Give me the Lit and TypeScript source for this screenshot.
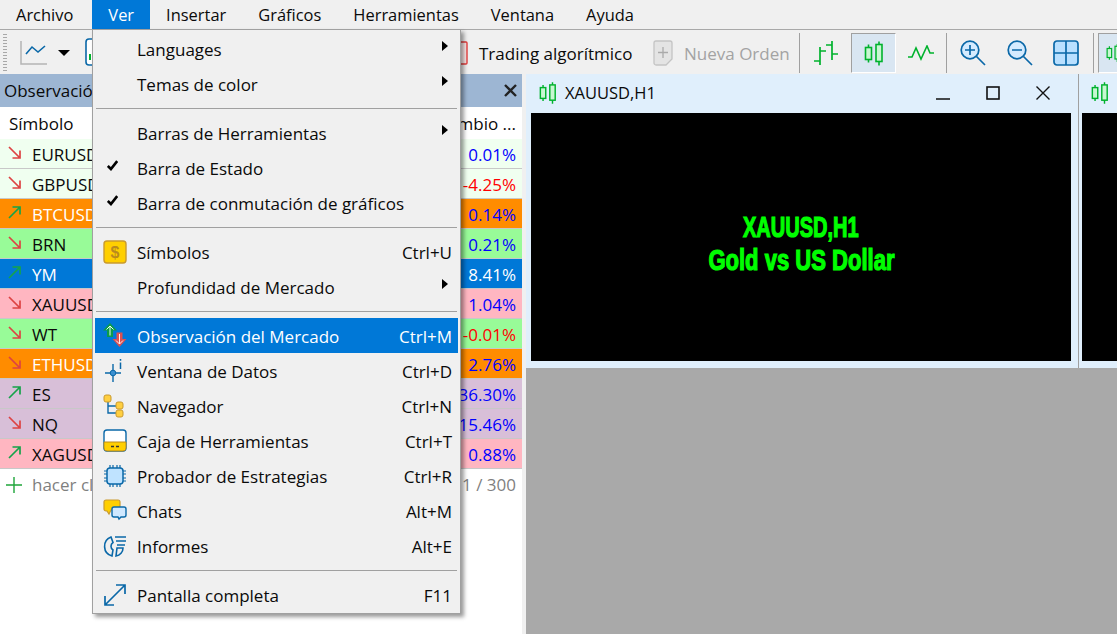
import { LitElement, html, css, svg } from "lit";
import { customElement } from "lit/decorators.js";

const G = "#00b22d";
const B = "#0a68a8";
const up = svg`<path d="M1 12 L12 1 M4.5 1 H12 V8.5" fill="none" stroke="#16a34a" stroke-width="1.7"/>`;
const down = svg`<path d="M1 1 L12 12 M4.5 12 H12 V4.5" fill="none" stroke="#dd4343" stroke-width="1.7"/>`;

const candles = (w: number, h: number) => html`<svg width=${w} height=${h} viewBox="0 0 20 24"><path d="M4.5 3V21M15 0V24" stroke=${G} stroke-width="1.6"/><rect x="1.5" y="6" width="6" height="12" fill="#c8f7d2" stroke=${G} stroke-width="1.6"/><rect x="12" y="3" width="6" height="17" fill="#c8f7d2" stroke=${G} stroke-width="1.6"/></svg>`;

type Row = { s: string; c: string; bg: string; light?: boolean; neg?: boolean; up?: boolean };
const rows: Row[] = [
  { s: "EURUSD", c: "0.01%", bg: "#f0fff0" },
  { s: "GBPUSD", c: "-4.25%", bg: "#f0fff0", neg: true },
  { s: "BTCUSD", c: "0.14%", bg: "#ff8c00", light: true, up: true },
  { s: "BRN", c: "0.21%", bg: "#98fb98" },
  { s: "YM", c: "8.41%", bg: "#0078d7", light: true, up: true },
  { s: "XAUUSD", c: "1.04%", bg: "#ffb6c1" },
  { s: "WT", c: "-0.01%", bg: "#98fb98", neg: true },
  { s: "ETHUSD", c: "2.76%", bg: "#ff8c00", light: true },
  { s: "ES", c: "36.30%", bg: "#d8bfd8", up: true },
  { s: "NQ", c: "15.46%", bg: "#d8bfd8" },
  { s: "XAGUSD", c: "0.88%", bg: "#ffb6c1", up: true },
];

const icons: Record<string, unknown> = {
  dollar: html`<svg width="24" height="24" viewBox="0 0 24 24"><rect x="1" y="1" width="22" height="22" rx="3" fill="#ffcf00" stroke="#c99a2e" stroke-width="1.4"/><text x="12" y="18" text-anchor="middle" font-family="Liberation Sans" font-weight="700" font-size="16" fill="#b98a1e">$</text></svg>`,
  market: html`<svg width="26" height="26" viewBox="0 0 26 26"><path d="M8 0 L15 7.5 H11 V14 H5 V7.5 H1 Z" fill="#0b9b4a"/><path d="M8 3 V12.5 M4.5 6.5 L8 3 11.5 6.5" fill="none" stroke="#e8fff0" stroke-width="1"/><path d="M17.5 24 L10.5 16 H14.5 V9.5 H20.5 V16 H24.5 Z" fill="#dc5050"/><path d="M17.5 21 V11 M14 17.5 L17.5 21 21 17.5" fill="none" stroke="#ffecec" stroke-width="1"/></svg>`,
  data: html`<svg width="24" height="24" viewBox="0 0 24 24"><path d="M10 5V23M2 14H18" stroke=${B} stroke-width="1.4"/><circle cx="10" cy="14" r="2.8" fill="#3a8fd0" stroke=${B} stroke-width="1"/><path d="M17.5 0V1.8M17.5 3.5V10" stroke=${B} stroke-width="1.5"/></svg>`,
  nav: html`<svg width="24" height="24" viewBox="0 0 24 24"><path d="M5 5V19H15M5 12H15" fill="none" stroke=${B} stroke-width="1.4"/><rect x="1" y="1" width="7" height="7" rx="2" fill="#ffcf40" stroke="#c99a2e"/><rect x="13" y="8" width="7" height="7" rx="2" fill="#ffcf40" stroke="#c99a2e"/><rect x="13" y="16" width="7" height="7" rx="2" fill="#ffcf40" stroke="#c99a2e"/></svg>`,
  box: html`<svg width="24" height="24" viewBox="0 0 24 24"><rect x="1" y="1" width="22" height="21" rx="3" fill="#fff" stroke=${B} stroke-width="1.4"/><path d="M1 13H23V19a3 3 0 0 1-3 3H4a3 3 0 0 1-3-3Z" fill="#ffcf00" stroke="#b98a1e"/><path d="M8 17.5H11M13 17.5H16" stroke="#333" stroke-width="1.3"/></svg>`,
  chip: html`<svg width="24" height="24" viewBox="0 0 24 24"><rect x="4" y="4" width="16" height="16" rx="3" fill="#bfe3ff" stroke=${B} stroke-width="1.5"/><path d="M7 1V4M10 1V4M14 1V4M17 1V4M7 20V23M10 20V23M14 20V23M17 20V23M1 7H4M1 10H4M1 14H4M1 17H4M20 7H23M20 10H23M20 14H23M20 17H23" stroke=${B} stroke-width="1.2"/></svg>`,
  chat: html`<svg width="24" height="24" viewBox="0 0 24 24"><path d="M3 1H15a2 2 0 0 1 2 2V11H8L6 15 4 12H3a2 2 0 0 1-2-2V3a2 2 0 0 1 2-2Z" fill="#ffcf00" stroke="#c99a2e" stroke-width="1.2"/><path d="M11 8H21a2 2 0 0 1 2 2V16a2 2 0 0 1-2 2H18L16 20 15 18H11a2 2 0 0 1-2-2V10a2 2 0 0 1 2-2Z" fill="#cfe8ff" stroke=${B} stroke-width="1.4"/></svg>`,
  report: html`<svg width="24" height="24" viewBox="0 0 24 24"><path d="M8 3 A10 10 0 0 0 9 22 L10 16 A4.5 4.5 0 0 1 10 8.5 Z" fill="none" stroke=${B} stroke-width="1.6"/><path d="M13 22 A8 8 0 0 0 20 14 H14 Z" fill="none" stroke=${B} stroke-width="1.6"/><path d="M12 3H23M13 7H23M14 11H22" stroke=${B} stroke-width="1.4"/></svg>`,
  full: html`<svg width="24" height="24" viewBox="0 0 24 24"><path d="M2 22 L22 2 M13 2H22V11 M2 13V22H11" fill="none" stroke=${B} stroke-width="1.7"/></svg>`,
};

type Item = { l?: string; k?: string; i?: string; sub?: boolean; chk?: boolean; on?: boolean; sep?: boolean };
const items: Item[] = [
  { l: "Languages", sub: true },
  { l: "Temas de color", sub: true },
  { sep: true },
  { l: "Barras de Herramientas", sub: true },
  { l: "Barra de Estado", chk: true },
  { l: "Barra de conmutación de gráficos", chk: true },
  { sep: true },
  { l: "Símbolos", k: "Ctrl+U", i: "dollar" },
  { l: "Profundidad de Mercado", sub: true },
  { sep: true },
  { l: "Observación del Mercado", k: "Ctrl+M", i: "market", on: true },
  { l: "Ventana de Datos", k: "Ctrl+D", i: "data" },
  { l: "Navegador", k: "Ctrl+N", i: "nav" },
  { l: "Caja de Herramientas", k: "Ctrl+T", i: "box" },
  { l: "Probador de Estrategias", k: "Ctrl+R", i: "chip" },
  { l: "Chats", k: "Alt+M", i: "chat" },
  { l: "Informes", k: "Alt+E", i: "report" },
  { sep: true },
  { l: "Pantalla completa", k: "F11", i: "full" },
];

@customElement("app-root")
export class AppRoot extends LitElement {
  static styles = css`
    :host { display: block; position: relative; width: 1117px; height: 634px; overflow: hidden; background: #f0f0f0; color: #0a0a0a;
      font-family: "Open Sans", "Noto Sans", sans-serif; font-size: 17px; }
    .menubar { display: flex; height: 29px; border-bottom: 1px solid #a8a8a8; line-height: 29px; font-size: 16.45px; }
    .menubar span { padding: 0 16px; }
    .menubar .m0 { padding-right: 19px; }
    .menubar .act { background: #0078d7; color: #fff; }
    .toolbar { display: flex; align-items: center; height: 44px; padding-top: 2px; box-sizing: border-box; white-space: nowrap; }
    .toolbar > * { flex: none; }
    .grip { width: 4px; height: 40px; margin-left: 3px; background-image: radial-gradient(#a8a8a8 45%, transparent 50%); background-size: 2px 3px; }
    .tsep { width: 1px; height: 40px; background: #a0a0a0; }
    .tool { display: flex; align-items: center; justify-content: center; width: 46.5px; height: 40px; box-sizing: border-box; }
    .wide { width: 51px; }
    .mid { width: 50px; }
    .first { margin-left: 3px; }
    .last { margin-right: 3px; }
    .pressed { background: #d9e6f2; border: 1px solid; border-color: #a0a0a0 #fff #fff #a0a0a0; width: 45px; }
    .tail { margin-left: 4px; width: 40px; justify-content: flex-start; padding-left: 7px; }
    .t1 { margin-left: 13px; }
    .t2 { margin-left: 10px; }
    .t3 { margin-left: 15px; }
    .gap { width: 350px; }
    .algo { margin-left: 11px; width: 174px; }
    .neworder { display: flex; align-items: center; gap: 11px; color: #a3a3a3; width: 146px; }
    .main { display: flex; height: 560px; }
    .panel { width: 522px; flex: none; display: flex; flex-direction: column; }
    .ptitle { height: 33px; background: #9db6d3; display: flex; justify-content: space-between; align-items: center; padding: 0 5px 0 4px; flex: none; box-sizing: border-box; }
    .thead { height: 32px; background: #fff; display: flex; justify-content: space-between; align-items: center; padding: 1px 6px 0 9px; flex: none; box-sizing: border-box; }
    .row { height: 30px; box-sizing: border-box; border-bottom: 1px solid #c8c8c8; display: flex; align-items: center; justify-content: space-between; padding: 1px 6px 0 8px; flex: none; }
    .sym { display: flex; align-items: center; gap: 11px; }
    .sym svg { margin-top: -4px; }
    .chg { color: #0000ff; }
    .chg.neg { color: #ff0000; }
    .chg.white { color: #fff; }
    .light { color: #fff; }
    .add { height: 31px; background: #fff; display: flex; justify-content: space-between; align-items: center; padding: 0 6px; color: #7f7f7f; flex: none; }
    .add div { display: flex; align-items: center; gap: 10px; }
    .fill { flex: 1; background: #fff; }
    .area { flex: 1; margin-left: 4px; display: flex; flex-direction: column; min-width: 0; }
    .windows { display: flex; height: 294px; background: #e0effc; flex: none; }
    .win { width: 552px; flex: none; border-right: 1px solid #a0a0a0; display: flex; flex-direction: column; }
    .wtitle { height: 39px; display: flex; align-items: center; padding: 0 0 2px 13px; gap: 8px; flex: none; box-sizing: border-box; }
    .wname { flex: 1; font-size: 16.5px; }
    .wbtn { display: flex; gap: 36px; align-items: center; margin-right: 28px; }
    .black { width: 540px; height: 248px; margin-left: 5px; background: #000; color: #00ff00; display: flex; flex-direction: column; align-items: center; justify-content: center; padding-top: 14px; box-sizing: border-box;
      font-family: "Liberation Sans", sans-serif; font-weight: 700; font-size: 29px; line-height: 33px; -webkit-text-stroke: 1.2px #00ff00; }
    .black span { display: block; white-space: nowrap; }
    .l1 { transform: scaleX(0.69); }
    .l2 { transform: scaleX(0.76); }
    .win2 { flex: 1; display: flex; flex-direction: column; min-width: 0; }
    .win2 .wtitle { padding-left: 12px; }
    .black2 { height: 248px; margin-left: 3px; background: #000; }
    .gray { flex: 1; background: #a9a9a9; }
    .menu { position: absolute; left: 92px; top: 29px; width: 369px; height: 585px; box-sizing: border-box; background: #f0f0f0; border: 1px solid #a0a0a0; padding: 1px 2px; box-shadow: 3px 3px 4px rgba(0,0,0,.4); }
    .mi { height: 35px; display: flex; align-items: center; padding-right: 6px; }
    .mi.on { background: #0078d7; color: #fff; }
    .mi .ic { width: 42px; flex: none; display: flex; justify-content: center; padding-right: 2px; box-sizing: border-box; }
    .mi .ic svg { flex: none; }
    .mi .lab { flex: 1; padding-top: 2px; }
    .mi .key { padding-top: 2px; }
    .arrow { width: 0; height: 0; border-left: 6px solid #000; border-top: 5px solid transparent; border-bottom: 5px solid transparent; margin: 0 4px 6px 0; }
    .check { width: 11px; height: 11px; margin: 0 6px 4px 0; }
    .ms { height: 14px; display: flex; align-items: center; padding: 0 1px; }
    .ms i { display: block; width: 100%; height: 1px; background: #a0a0a0; }
  `;

  render() {
    return html`
      <div class="menubar">
        <span class="m0">Archivo</span><span class="act">Ver</span><span>Insertar</span><span>Gráficos</span><span>Herramientas</span><span>Ventana</span><span>Ayuda</span>
      </div>
      <div class="toolbar">
        <div class="grip"></div>
        <svg class="t1" width="28" height="26" viewBox="0 0 28 26"><path d="M1 1V24H27" fill="none" stroke="#b4b4b4" stroke-width="1.5"/><path d="M6 14L12 7 18 12 25 6" fill="none" stroke=${B} stroke-width="1.6"/></svg>
        <svg class="t2" width="12" height="8" viewBox="0 0 12 8"><path d="M0 1H12L6 7Z"/></svg>
        <svg class="t3" width="24" height="30" viewBox="0 0 24 30"><rect x="1" y="1" width="20" height="26" rx="3" fill="#fff" stroke=${B} stroke-width="1.6"/><path d="M5 16V22" stroke=${G} stroke-width="2"/></svg>
        <div class="gap"></div>
        <svg width="9" height="24" viewBox="0 0 9 24"><path d="M0 1H7a1 1 0 0 1 1 1V22a1 1 0 0 1-1 1H0" fill="#fde8e8" stroke="#e23c3c" stroke-width="1.4"/></svg>
        <div class="algo">Trading algorítmico</div>
        <div class="neworder"><svg width="20" height="26" viewBox="0 0 20 26"><path d="M3 1H17a2 2 0 0 1 2 2V19L13 25H3a2 2 0 0 1-2-2V3a2 2 0 0 1 2-2Z" fill="#e4e4e4" stroke="#c4c4c4" stroke-width="1.3"/><path d="M10 7V18M5 12.5H15" stroke="#aaa" stroke-width="1.3"/></svg>Nueva Orden</div>
        <div class="tsep"></div>
        <div class="tool wide"><svg width="26" height="26" viewBox="0 0 26 26"><path d="M7 7V25M1 21H7M7 11H13M19 1V20M13 5H19M19 14H25" fill="none" stroke=${G} stroke-width="1.7"/></svg></div>
        <div class="tool pressed">${candles(20, 25)}</div>
        <div class="tool mid"><svg width="26" height="16" viewBox="0 0 26 16"><path d="M0 12H4L8 3 13 14 19 1 22 8H26" fill="none" stroke=${G} stroke-width="1.6"/></svg></div>
        <div class="tsep"></div>
        <div class="tool first"><svg width="26" height="26" viewBox="0 0 26 26"><circle cx="10" cy="10" r="8.8" fill="#d4ebff" stroke=${B} stroke-width="1.7"/><path d="M16.5 16.5L25 25M5 10H15M10 5V15" stroke=${B} stroke-width="1.7"/></svg></div>
        <div class="tool"><svg width="26" height="26" viewBox="0 0 26 26"><circle cx="10" cy="10" r="8.8" fill="#d4ebff" stroke=${B} stroke-width="1.7"/><path d="M16.5 16.5L25 25M5 10H15" stroke=${B} stroke-width="1.7"/></svg></div>
        <div class="tool last"><svg width="26" height="26" viewBox="0 0 26 26"><rect x="1" y="1" width="24" height="24" rx="3" fill="#b9e0ff" stroke=${B} stroke-width="1.7"/><path d="M13 1V25M1 13H25" stroke=${B} stroke-width="1.7"/></svg></div>
        <div class="tsep"></div>
        <div class="tool pressed tail">${candles(15, 20)}</div>
      </div>
      <div class="main">
        <div class="panel">
          <div class="ptitle"><span>Observación</span><svg width="13" height="13" viewBox="0 0 13 13"><path d="M1 1L12 12M12 1L1 12" stroke="#222" stroke-width="2.4"/></svg></div>
          <div class="thead"><span>Símbolo</span><span>Cambio ...</span></div>
          ${rows.map(
            (r) => html`<div class="row" style="background:${r.bg}">
              <div class="sym ${r.light ? "light" : ""}"><svg width="13" height="13" viewBox="0 0 13 13">${r.up ? up : down}</svg>${r.s}</div>
              <div class="chg ${r.neg ? "neg" : ""} ${r.s === "YM" ? "white" : ""}">${r.c}</div>
            </div>`
          )}
          <div class="add"><div><svg width="16" height="16" viewBox="0 0 16 16"><path d="M8 0V16M0 8H16" stroke="#1fa53a" stroke-width="1.4"/></svg>hacer clic</div><span>11 / 300</span></div>
          <div class="fill"></div>
        </div>
        <div class="area">
          <div class="windows">
            <div class="win">
              <div class="wtitle">${candles(18, 22)}<span class="wname">XAUUSD,H1</span>
                <div class="wbtn">
                  <svg width="14" height="14" viewBox="0 0 14 14"><path d="M0 13H14" stroke="#111" stroke-width="1.5"/></svg>
                  <svg width="14" height="14" viewBox="0 0 14 14"><rect x="1" y="1" width="12" height="12" fill="none" stroke="#111" stroke-width="1.6"/></svg>
                  <svg width="14" height="14" viewBox="0 0 14 14"><path d="M0.5 0.5L13.5 13.5M13.5 0.5L0.5 13.5" stroke="#111" stroke-width="1.4"/></svg>
                </div>
              </div>
              <div class="black"><span class="l1">XAUUSD,H1</span><span class="l2">Gold vs US Dollar</span></div>
            </div>
            <div class="win2">
              <div class="wtitle">${candles(18, 22)}</div>
              <div class="black2"></div>
            </div>
          </div>
          <div class="gray"></div>
        </div>
      </div>
      <div class="menu">
        ${items.map((m) =>
          m.sep
            ? html`<div class="ms"><i></i></div>`
            : html`<div class="mi ${m.on ? "on" : ""}">
                <div class="ic">
                  ${m.chk ? html`<svg class="check" viewBox="0 0 14 13"><path d="M1 7L5 11 13 1" fill="none" stroke="#000" stroke-width="3.4"/></svg>` : ""}
                  ${m.i ? icons[m.i] : ""}
                </div>
                <div class="lab">${m.l}</div>
                ${m.k ? html`<div class="key">${m.k}</div>` : ""}
                ${m.sub ? html`<div class="arrow"></div>` : ""}
              </div>`
        )}
      </div>
    `;
  }
}
